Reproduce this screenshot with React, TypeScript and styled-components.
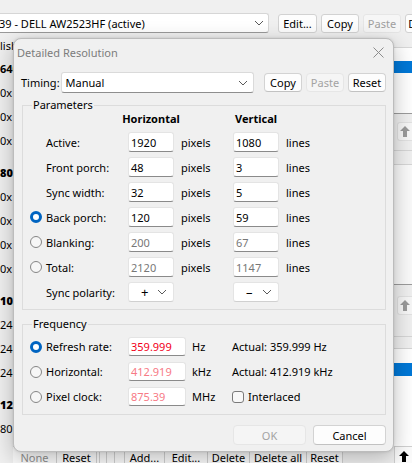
import React from "react";
import styled, { createGlobalStyle } from "styled-components";

const GlobalStyle = createGlobalStyle`
  html, body { margin: 0; padding: 0; }
  body {
    background: #f0f0f0;
    font-family: "Noto Sans", "Open Sans", sans-serif;
    font-size: 11px;
    color: #000;
  }
`;

const Screen = styled.div`
  position: relative;
  width: 412px;
  height: 463px;
  overflow: hidden;
  display: flex;
  flex-direction: column;
  background: #f0f0f0;
`;

/* ---------- background window ---------- */

const TopBar = styled.div`
  height: 38px;
  box-sizing: border-box;
  padding-top: 13px;
  display: flex;
  align-items: flex-start;
  gap: 4px;
  flex-shrink: 0;
`;

const MainCombo = styled.div`
  margin-left: -10px;
  margin-right: 5px;
  width: 279px;
  height: 20px;
  box-sizing: border-box;
  flex-shrink: 0;
  display: flex;
  align-items: center;
  justify-content: space-between;
  padding: 0 4px 0 8px;
  background: #fff;
  border: 1px solid #d6d6d6;
  border-bottom-color: #9a9a9a;
  border-radius: 3px;
  white-space: nowrap;
`;

const BgButton = styled.div<{ $w: number; $off?: boolean }>`
  width: ${(p) => p.$w}px;
  height: 19px;
  margin-top: 1px;
  box-sizing: border-box;
  flex-shrink: 0;
  display: flex;
  align-items: center;
  justify-content: center;
  overflow: hidden;
  white-space: nowrap;
  border-radius: 3px;
  background: ${(p) => (p.$off ? "#f6f6f6" : "#fdfdfd")};
  border: 1px solid ${(p) => (p.$off ? "#e6e6e6" : "#d2d2d2")};
  color: ${(p) => (p.$off ? "#a0a0a0" : "#000")};
`;

const Middle = styled.div`
  flex: 1;
  display: flex;
  min-height: 0;
`;

const LeftList = styled.div`
  width: 13px;
  flex-shrink: 0;
  margin-top: -3px;
  display: flex;
  flex-direction: column;
  white-space: nowrap;
`;

const ListItem = styled.div<{ $head?: boolean; $h?: number }>`
  height: ${(p) => p.$h ?? 24}px;
  line-height: ${(p) => p.$h ?? 24}px;
  margin-top: ${(p) => (p.$head ? 8 : 0)}px;
  font-weight: ${(p) => (p.$head ? 700 : 400)};
`;

const Hidden = styled.div`
  flex: 1;
`;

const RightRail = styled.div`
  width: 18px;
  flex-shrink: 0;
  display: flex;
  flex-direction: column;
  background: #f0f0f0;
`;

const Strip = styled.div<{ $h?: number; $bg?: string; $line?: string }>`
  height: ${(p) => (p.$h ? `${p.$h}px` : "auto")};
  flex: ${(p) => (p.$h ? "0 0 auto" : "1")};
  background: ${(p) => p.$bg ?? "#f0f0f0"};
  border-bottom: ${(p) => (p.$line ? `1px solid ${p.$line}` : "none")};
`;

const ArrowBtn = styled.div`
  height: 17px;
  margin-left: 3px;
  display: flex;
  align-items: center;
  justify-content: center;
  background: #f7f7f7;
  border: 1px solid #e2e2e2;
  border-right: none;
  border-radius: 3px 0 0 3px;
  color: #9a9a9a;
`;

const BottomBar = styled.div`
  height: 17px;
  flex-shrink: 0;
  display: flex;
  padding-left: 13px;
`;

const BarButton = styled.div<{ $w: number; $off?: boolean }>`
  width: ${(p) => p.$w}px;
  height: 24px;
  box-sizing: border-box;
  flex-shrink: 0;
  text-align: center;
  line-height: 22px;
  white-space: nowrap;
  overflow: hidden;
  background: #fbfbfb;
  border: 1px solid #d0d0d0;
  border-left: none;
  color: ${(p) => (p.$off ? "#8f8f8f" : "#000")};
`;

const BarSpacer = styled.div`
  flex: 1;
`;

const BarArrow = styled.div`
  width: 17px;
  display: flex;
  justify-content: center;
  padding-top: 4px;
  background: #fbfbfb;
  border-left: 1px solid #d0d0d0;
  border-top: 1px solid #d0d0d0;
  color: #000;
`;

/* ---------- dialog ---------- */

const Dialog = styled.div`
  position: absolute;
  left: 13px;
  top: 38px;
  width: 381px;
  height: 414px;
  box-sizing: border-box;
  display: flex;
  flex-direction: column;
  background: #f0f0f0;
  border: 1px solid #bcbcbc;
  border-radius: 8px;
  box-shadow: 0 6px 22px rgba(0, 0, 0, 0.26), 0 0 3px rgba(0, 0, 0, 0.12);
`;

const TitleBar = styled.div`
  height: 30px;
  box-sizing: border-box;
  flex-shrink: 0;
  display: flex;
  align-items: center;
  justify-content: space-between;
  padding: 0 9px 4px 3px;
  color: #7c7c7c;
  font-size: 11px;
`;

const Body = styled.div`
  padding: 0 7px 0 8px;
  display: flex;
  flex-direction: column;
`;

const TimingRow = styled.div`
  margin-top: 3px;
  height: 21px;
  display: flex;
  align-items: center;
`;

const TimingLabel = styled.span`
  margin-left: -1px;
  margin-right: 1px;
  white-space: nowrap;
  flex-shrink: 0;
`;

const Combo = styled.div`
  flex: 1;
  height: 21px;
  box-sizing: border-box;
  margin-right: 10px;
  display: flex;
  align-items: center;
  justify-content: space-between;
  padding: 0 5px 0 4px;
  background: #fff;
  border: 1px solid #dadada;
  border-bottom-color: #8e8e8e;
  border-radius: 3px;
`;

const ButtonRow = styled.div<{ $gap: number }>`
  display: flex;
  flex-shrink: 0;
  gap: ${(p) => p.$gap}px;
  justify-content: flex-end;
`;

const Button = styled.div<{ $w: number; $h?: number; $off?: boolean }>`
  width: ${(p) => p.$w}px;
  height: ${(p) => p.$h ?? 20}px;
  box-sizing: border-box;
  display: flex;
  align-items: center;
  justify-content: center;
  border-radius: 4px;
  background: ${(p) => (p.$off ? "#f5f5f5" : "#fdfdfd")};
  border: 1px solid ${(p) => (p.$off ? "#e6e6e6" : "#d3d3d3")};
  border-bottom-color: ${(p) => (p.$off ? "#e6e6e6" : "#c2c2c2")};
  color: ${(p) => (p.$off ? "#a3a3a3" : "#000")};
`;

const Group = styled.div<{ $mt: number; $pt: number; $pb: number }>`
  position: relative;
  margin-top: ${(p) => p.$mt}px;
  padding: ${(p) => p.$pt}px 0 ${(p) => p.$pb}px;
  border: 1px solid #dcdcdc;
`;

const Caption = styled.span`
  position: absolute;
  top: -9px;
  left: 9px;
  padding: 0 1px;
  line-height: 16px;
  background: #f0f0f0;
`;

const Grid = styled.div<{ $cols: string; $row: number; $gap: number }>`
  display: grid;
  grid-template-columns: ${(p) => p.$cols};
  grid-auto-rows: ${(p) => p.$row}px;
  row-gap: ${(p) => p.$gap}px;
  align-items: center;
`;

const HeadCell = styled.div`
  display: flex;
  justify-content: center;
  font-weight: 700;
  white-space: nowrap;
  height: 16px;
  line-height: 16px;
`;

const HeadRow = styled(Grid)`
  margin-bottom: 5px;
`;

const RowLabel = styled.div`
  display: flex;
  align-items: center;
  gap: 4px;
  padding-left: 7px;
  white-space: nowrap;
`;

const Radio = styled.span<{ $on?: boolean; $none?: boolean }>`
  width: 12px;
  height: 12px;
  box-sizing: border-box;
  border-radius: 50%;
  flex-shrink: 0;
  visibility: ${(p) => (p.$none ? "hidden" : "visible")};
  border: ${(p) => (p.$on ? "3.5px solid #0064c1" : "1px solid #858585")};
  background: ${(p) => (p.$on ? "#fff" : "#f6f6f6")};
`;

type Tone = "normal" | "dim" | "red" | "pink";
const toneColor: Record<Tone, string> = {
  normal: "#000",
  dim: "#777",
  red: "#f2001a",
  pink: "#f77a86",
};

const Field = styled.div<{ $tone?: Tone }>`
  height: 100%;
  box-sizing: border-box;
  display: flex;
  align-items: center;
  padding-left: 2px;
  background: #fff;
  border: 1px solid #e4e4e4;
  border-bottom-color: #8a8a8a;
  border-radius: 3px;
  color: ${(p) => toneColor[p.$tone ?? "normal"]};
`;

const Picker = styled(Field)`
  justify-content: space-between;
  padding: 0 6px 0 12px;
  border-bottom-color: #d0d0d0;
  font-size: 13px;
`;

const Unit = styled.div<{ $pl: number }>`
  padding-left: ${(p) => p.$pl}px;
  white-space: nowrap;
`;

const CheckRow = styled.div`
  display: flex;
  align-items: center;
  gap: 4px;
`;

const Check = styled.span`
  width: 12px;
  height: 12px;
  box-sizing: border-box;
  border: 1px solid #7a7a7a;
  border-radius: 3px;
  background: #f8f8f8;
`;

const Footer = styled(ButtonRow)`
  margin-top: 10px;
`;

/* ---------- drawings ---------- */

const Chevron = () => (
  <svg width="10" height="6" viewBox="0 0 10 6">
    <path d="M1 1 L5 5 L9 1" fill="none" stroke="#5a5a5a" strokeWidth="1" />
  </svg>
);

const CloseIcon = () => (
  <svg width="11" height="11" viewBox="0 0 11 11">
    <path d="M0.5 0.5 L10.5 10.5 M10.5 0.5 L0.5 10.5" stroke="#8c8c8c" strokeWidth="1" />
  </svg>
);

const UpArrow = () => (
  <svg width="10" height="11" viewBox="0 0 10 11">
    <path d="M5 0 L10 5 H7 V11 H3 V5 H0 Z" fill="currentColor" />
  </svg>
);

const params: { label: string; radio: "none" | "on" | "off"; h: string; v: string; dim?: boolean }[] = [
  { label: "Active:", radio: "none", h: "1920", v: "1080" },
  { label: "Front porch:", radio: "none", h: "48", v: "3" },
  { label: "Sync width:", radio: "none", h: "32", v: "5" },
  { label: "Back porch:", radio: "on", h: "120", v: "59" },
  { label: "Blanking:", radio: "off", h: "200", v: "67", dim: true },
  { label: "Total:", radio: "off", h: "2120", v: "1147", dim: true },
];

const freq: { label: string; on: boolean; value: string; tone: Tone; unit: string; extra: string | null }[] = [
  { label: "Refresh rate:", on: true, value: "359.999", tone: "red", unit: "Hz", extra: "Actual: 359.999 Hz" },
  { label: "Horizontal:", on: false, value: "412.919", tone: "pink", unit: "kHz", extra: "Actual: 412.919 kHz" },
  { label: "Pixel clock:", on: false, value: "875.39", tone: "pink", unit: "MHz", extra: null },
];

const leftItems: { t: string; head?: boolean; h?: number }[] = [
  { t: "lish", h: 22 },
  { t: "640", head: true },
  { t: "0x" },
  { t: "0x" },
  { t: "0x" },
  { t: "800", head: true },
  { t: "0x" },
  { t: "0x" },
  { t: "0x" },
  { t: "0x" },
  { t: "102", head: true },
  { t: "24" },
  { t: "24" },
  { t: "24" },
  { t: "128", head: true },
  { t: "80" },
];

const PARAM_COLS = "105px 46px 59px 46px 1fr";
const FREQ_COLS = "105px 58px 46px 1fr";

export default function App() {
  return (
    <>
      <GlobalStyle />
      <Screen>
        <TopBar>
          <MainCombo>
            <span>39 - DELL AW2523HF (active)</span>
            <Chevron />
          </MainCombo>
          <BgButton $w={39}>Edit...</BgButton>
          <BgButton $w={38}>Copy</BgButton>
          <BgButton $w={38} $off>
            Paste
          </BgButton>
          <BgButton $w={40}>Delete</BgButton>
        </TopBar>

        <Middle>
          <LeftList>
            {leftItems.map((it, i) => (
              <ListItem key={i} $head={it.head && i > 1} $h={it.h}>
                {it.head ? <b>{it.t}</b> : it.t}
              </ListItem>
            ))}
          </LeftList>
          <Hidden />
          <RightRail>
            <Strip $h={9} $line="#d8d8d8" />
            <Strip $h={13} $bg="#fff" />
            <Strip $h={12} $bg="#0078d7" />
            <Strip $h={40} $bg="#fff" $line="#9c9c9c" />
            <Strip $h={8} />
            <ArrowBtn>
              <UpArrow />
            </ArrowBtn>
            <Strip $h={9} $line="#d6d6d6" />
            <Strip $h={13} $line="#d6d6d6" />
            <Strip $h={119} $bg="#fafafa" $line="#9c9c9c" />
            <Strip $h={11} />
            <ArrowBtn>
              <UpArrow />
            </ArrowBtn>
            <Strip $h={21} $line="#d6d6d6" />
            <Strip $h={11} $line="#d6d6d6" />
            <Strip $h={14} $bg="#fff" />
            <Strip $h={13} $bg="#0078d7" />
            <Strip $bg="#fff" />
          </RightRail>
        </Middle>

        <BottomBar>
          <BarButton $w={44} $off>
            None
          </BarButton>
          <BarButton $w={40}>Reset</BarButton>
          <BarButton $w={3} />
          <BarButton $w={7} />
          <BarButton $w={8} />
          <BarButton $w={10} />
          <BarButton $w={40}>Add...</BarButton>
          <BarButton $w={43}>Edit...</BarButton>
          <BarButton $w={42}>Delete</BarButton>
          <BarButton $w={57}>Delete all</BarButton>
          <BarButton $w={36}>Reset</BarButton>
          <BarSpacer />
          <BarArrow>
            <UpArrow />
          </BarArrow>
        </BottomBar>

        <Dialog>
          <TitleBar>
            <span>Detailed Resolution</span>
            <CloseIcon />
          </TitleBar>
          <Body>
            <TimingRow>
              <TimingLabel>Timing:</TimingLabel>
              <Combo>
                <span>Manual</span>
                <Chevron />
              </Combo>
              <ButtonRow $gap={4}>
                <Button $w={38} $h={19}>
                  Copy
                </Button>
                <Button $w={38} $h={19} $off>
                  Paste
                </Button>
                <Button $w={38} $h={19}>
                  Reset
                </Button>
              </ButtonRow>
            </TimingRow>

            <Group $mt={12} $pt={5} $pb={7}>
              <Caption>Parameters</Caption>
              <HeadRow $cols={PARAM_COLS} $row={16} $gap={0}>
                <span />
                <HeadCell>Horizontal</HeadCell>
                <span />
                <HeadCell>Vertical</HeadCell>
                <span />
              </HeadRow>
              <Grid $cols={PARAM_COLS} $row={20} $gap={5}>
                {params.map((r) => (
                  <React.Fragment key={r.label}>
                    <RowLabel>
                      <Radio $on={r.radio === "on"} $none={r.radio === "none"} />
                      {r.label}
                    </RowLabel>
                    <Field $tone={r.dim ? "dim" : "normal"}>{r.h}</Field>
                    <Unit $pl={7}>pixels</Unit>
                    <Field $tone={r.dim ? "dim" : "normal"}>{r.v}</Field>
                    <Unit $pl={7}>lines</Unit>
                  </React.Fragment>
                ))}
                <RowLabel>
                  <Radio $none />
                  Sync polarity:
                </RowLabel>
                <Picker>
                  <span>+</span>
                  <Chevron />
                </Picker>
                <span />
                <Picker>
                  <span>–</span>
                  <Chevron />
                </Picker>
                <span />
              </Grid>
            </Group>

            <Group $mt={14} $pt={12} $pb={8}>
              <Caption>Frequency</Caption>
              <Grid $cols={FREQ_COLS} $row={19} $gap={6}>
                {freq.map((r) => (
                  <React.Fragment key={r.label}>
                    <RowLabel>
                      <Radio $on={r.on} />
                      {r.label}
                    </RowLabel>
                    <Field $tone={r.tone}>{r.value}</Field>
                    <Unit $pl={6}>{r.unit}</Unit>
                    {r.extra ? (
                      <span>{r.extra}</span>
                    ) : (
                      <CheckRow>
                        <Check />
                        Interlaced
                      </CheckRow>
                    )}
                  </React.Fragment>
                ))}
              </Grid>
            </Group>

            <Footer $gap={7}>
              <Button $w={73} $off>
                OK
              </Button>
              <Button $w={73}>Cancel</Button>
            </Footer>
          </Body>
        </Dialog>
      </Screen>
    </>
  );
}
